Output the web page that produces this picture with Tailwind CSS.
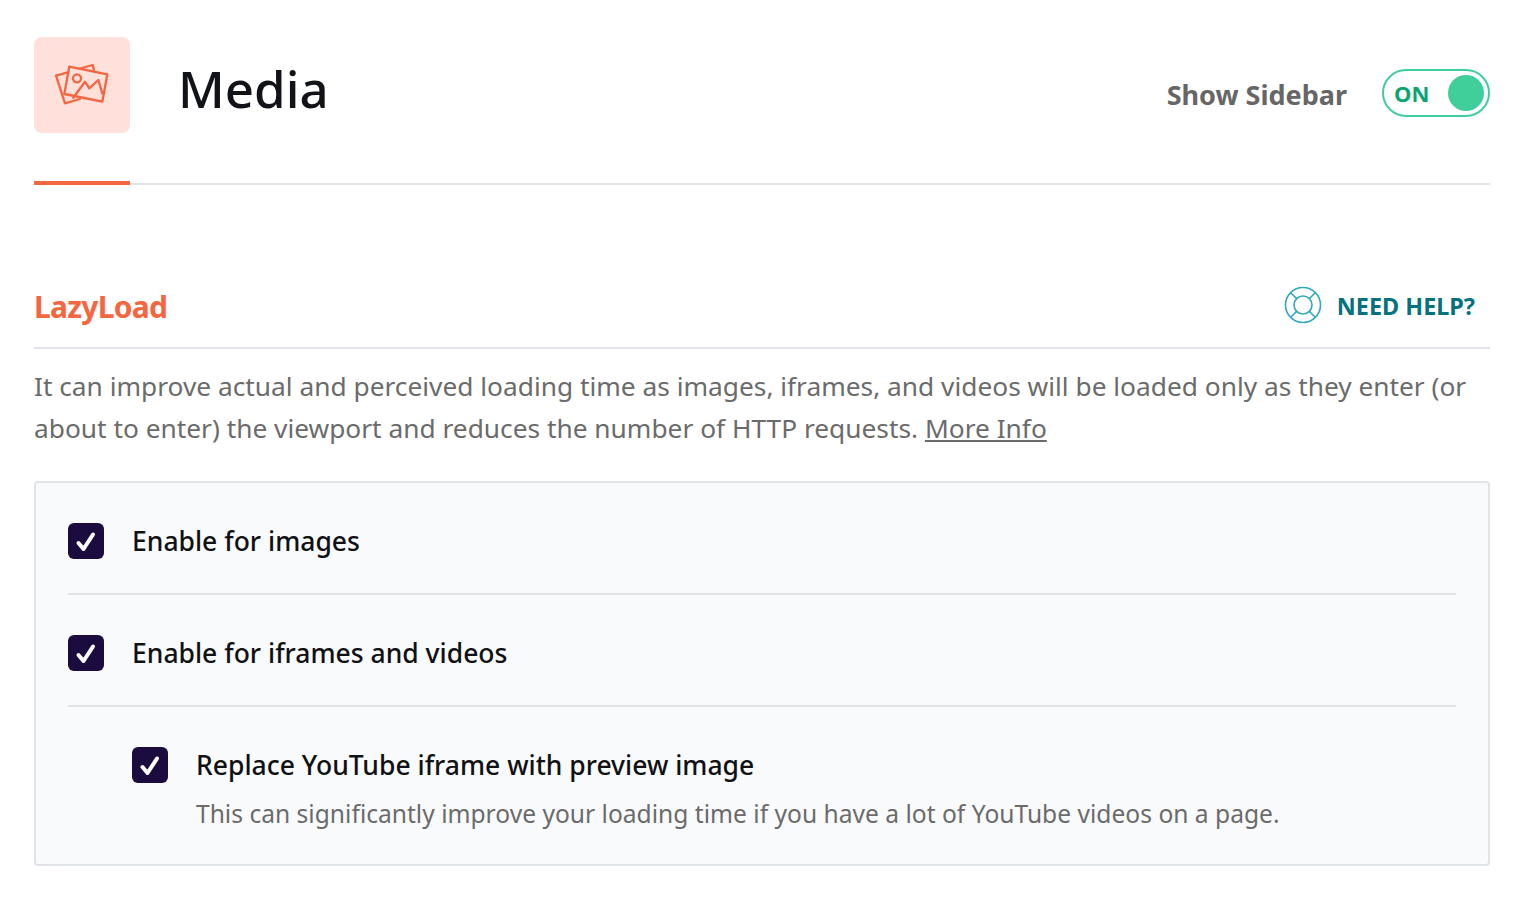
<!DOCTYPE html>
<html lang="en">
<head>
  <meta charset="UTF-8">
  <title>Media</title>
  <script src="https://cdn.jsdelivr.net/npm/@tailwindcss/browser@4"></script>
</head>
<body class="bg-white font-['Noto_Sans',sans-serif]">
<div class="pt-[37px] pl-[34px] pr-[35px]">
  <!-- header -->
  <div class="flex items-start h-[148px] border-b-2 border-[#e0e4e8] relative">
    <div class="w-[96px] h-[96px] rounded-lg bg-[#ffe0db]">
      <svg width="96" height="96" viewBox="34 37 96 96" fill="none" stroke="#f56640" stroke-width="2.3" stroke-linejoin="round" stroke-linecap="round">
        <path d="M69.3 66.7 L107.3 74.3 L102.3 101.7 L64.3 94 Z"/>
        <path d="M68 72.3 L56 75.7 L65 103.3 L80 99"/>
        <path d="M80 68.5 L92.7 65 L94 70"/>
        <circle cx="77" cy="78.3" r="4"/>
        <path d="M73.3 97.7 L85 81.7 L89.3 88.3 L98.3 80 L102.3 93.3"/>
      </svg>
    </div>
    <h1 class="ml-[48px] mt-[18px] text-[51px] leading-[66px] font-medium text-[#111318]">Media</h1>
    <div class="ml-auto mt-[30px] flex items-center">
      <span class="text-[27px] leading-[52px] font-bold text-[#666666] relative top-[2px] left-[1px]">Show Sidebar</span>
      <div class="ml-[36px] w-[108px] h-[48px] rounded-full border-2 border-[#3ecf9b] flex items-center justify-between pl-[10px] pr-[4px]">
        <span class="text-[22px] font-bold text-[#0ba56f]">ON</span>
        <span class="w-[36px] h-[36px] rounded-full bg-[#3ecf9b]"></span>
      </div>
    </div>
    <div class="absolute left-0 bottom-[-2px] w-[96px] h-[4px] bg-[#f56640]"></div>
  </div>

  <!-- section title -->
  <div class="mt-[93px] flex items-center justify-between h-[71px] border-b-2 border-[#e0e4e8] pb-[13px]">
    <h2 class="text-[30px] font-bold tracking-[-0.75px] text-[#f56640]">LazyLoad</h2>
    <a class="flex items-center pr-[15px]">
      <svg class="relative top-[-1px]" width="38" height="38" viewBox="0 0 38 38" fill="none" stroke="#2fa8c0" stroke-width="1.6">
        <circle cx="19" cy="19" r="17.5"/>
        <circle cx="19" cy="19" r="9"/>
        <path d="M7 7 L13 13 M31 7 L25 13 M7 31 L13 25 M31 31 L25 25"/>
      </svg>
      <span class="ml-[15px] text-[23.4px] font-bold text-[#04717f] relative top-[1px]">NEED HELP?</span>
    </a>
  </div>

  <p class="mt-[16px] text-[26.3px] leading-[42px] text-[#6b6b6b]">It can improve actual and perceived loading time as images, iframes, and videos will be loaded only as they enter (or about to enter) the viewport and reduces the number of HTTP requests. <a class="underline">More Info</a></p>

  <!-- options -->
  <div class="mt-[32px] bg-[#f9fafc] border-2 border-[#e0e4e8] rounded px-[32px]">
    <div class="flex items-center h-[112px] pt-[6px] border-b-2 border-[#e0e4e8]">
      <span class="w-[36px] h-[36px] rounded-md bg-[#1c0b3f] shrink-0">
        <svg width="36" height="36" viewBox="0 0 36 36" fill="none" stroke="#fff" stroke-width="4" stroke-linecap="round" stroke-linejoin="round"><path d="M10.5 20 L15.5 26 L25 11.5"/></svg>
      </span>
      <span class="ml-[28px] text-[26.5px] font-medium text-[#111114] relative top-[1px]">Enable for images</span>
    </div>
    <div class="flex items-center h-[112px] pt-[6px] border-b-2 border-[#e0e4e8]">
      <span class="w-[36px] h-[36px] rounded-md bg-[#1c0b3f] shrink-0">
        <svg width="36" height="36" viewBox="0 0 36 36" fill="none" stroke="#fff" stroke-width="4" stroke-linecap="round" stroke-linejoin="round"><path d="M10.5 20 L15.5 26 L25 11.5"/></svg>
      </span>
      <span class="ml-[28px] text-[26.5px] font-medium text-[#111114] relative top-[1px]">Enable for iframes and videos</span>
    </div>
    <div class="flex items-start h-[157px] pl-[64px] pt-[40px]">
      <span class="w-[36px] h-[36px] rounded-md bg-[#1c0b3f] shrink-0">
        <svg width="36" height="36" viewBox="0 0 36 36" fill="none" stroke="#fff" stroke-width="4" stroke-linecap="round" stroke-linejoin="round"><path d="M10.5 20 L15.5 26 L25 11.5"/></svg>
      </span>
      <div class="ml-[28px]">
        <div class="text-[26.5px] leading-[36px] font-medium text-[#111114]">Replace YouTube iframe with preview image</div>
        <div class="mt-[13px] text-[24.6px] leading-[36px] text-[#6b6b6b]">This can significantly improve your loading time if you have a lot of YouTube videos on a page.</div>
      </div>
    </div>
  </div>
</div>
</body>
</html>
